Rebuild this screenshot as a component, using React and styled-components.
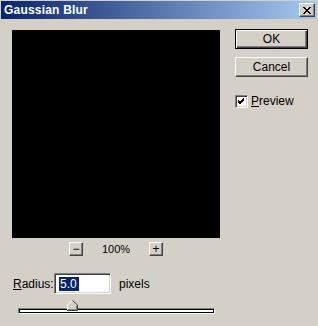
import React from 'react';
import styled, { createGlobalStyle } from 'styled-components';

const GlobalStyle = createGlobalStyle`
  html, body {
    margin: 0;
    padding: 0;
    background: #d4d0c8;
  }
  body {
    font-family: "Liberation Sans", Arial, sans-serif;
    font-size: 12px;
    color: #000;
  }
`;

const Window = styled.div`
  width: 318px;
  height: 326px;
  background: #d4d0c8;
  display: flex;
  flex-direction: column;
  box-sizing: border-box;
  padding: 1px 1px 0;
`;

const TitleBar = styled.div`
  height: 18px;
  display: flex;
  align-items: center;
  justify-content: space-between;
  padding: 0 2px 0 3px;
  background: linear-gradient(to right, #0a246a, #a6caf0);
`;

const Title = styled.span`
  color: #fff;
  font-weight: bold;
  font-size: 12px;
  letter-spacing: 0.2px;
`;

const CloseButton = styled.div`
  width: 16px;
  height: 14px;
  box-sizing: border-box;
  background: #d4d0c8;
  border: 1px solid;
  border-color: #fff #404040 #404040 #fff;
  box-shadow: inset -1px -1px 0 #808080;
  display: flex;
  align-items: center;
  justify-content: center;
`;

const Body = styled.div`
  display: flex;
  flex-direction: column;
  padding: 11px 0 0 11px;
`;

const TopRow = styled.div`
  display: flex;
  align-items: flex-start;
`;

const PreviewColumn = styled.div`
  width: 208px;
  display: flex;
  flex-direction: column;
`;

const Preview = styled.div`
  width: 208px;
  height: 208px;
  background: #000;
`;

const ZoomRow = styled.div`
  display: flex;
  align-items: center;
  margin-top: 4px;
  padding-left: 57px;
  height: 14px;
`;

const ZoomLabel = styled.span`
  width: 66px;
  text-align: center;
  font-size: 11px;
`;

const SmallButton = styled.div`
  width: 14px;
  height: 14px;
  box-sizing: border-box;
  border: 1px solid;
  border-color: #fff #404040 #404040 #fff;
  box-shadow: inset -1px -1px 0 #808080;
  display: flex;
  align-items: center;
  justify-content: center;
  font-size: 12px;
  line-height: 1;
`;

const ButtonColumn = styled.div`
  display: flex;
  flex-direction: column;
  margin-left: 15px;
  margin-top: -1px;
`;

const Button = styled.div`
  width: 73px;
  height: 20px;
  box-sizing: border-box;
  display: flex;
  align-items: center;
  justify-content: center;
  border: 1px solid;
  border-color: ${p => (p.$default ? '#000' : '#fff #404040 #404040 #fff')};
  box-shadow: ${p =>
    p.$default
      ? 'inset 1px 1px 0 #fff, inset -1px -1px 0 #404040, inset -2px -2px 0 #808080'
      : 'inset -1px -1px 0 #808080'};
  margin-bottom: 8px;
  font-size: 12px;
`;

const CheckRow = styled.label`
  display: flex;
  align-items: center;
  margin-top: 9px;
  gap: 3px;
`;

const CheckBox = styled.div`
  width: 13px;
  height: 13px;
  box-sizing: border-box;
  background: #fff;
  border: 1px solid;
  border-color: #808080 #fff #fff #808080;
  box-shadow: inset 1px 1px 0 #404040, inset -1px -1px 0 #d4d0c8;
  display: flex;
  align-items: center;
  justify-content: center;
`;

const Key = styled.span`
  text-decoration: underline;
`;

const RadiusRow = styled.div`
  display: flex;
  align-items: center;
  margin-top: 17px;
  padding-left: 1px;
`;

const Label = styled.span`
  width: 41px;
`;

const TextField = styled.div`
  width: 57px;
  height: 21px;
  box-sizing: border-box;
  background: #fff;
  border: 1px solid;
  border-color: #808080 #fff #fff #808080;
  box-shadow: inset 1px 1px 0 #404040, inset -1px -1px 0 #d4d0c8;
  display: flex;
  align-items: center;
  padding-left: 4px;
`;

const Selected = styled.span`
  background: #0a246a;
  color: #fff;
  padding: 1px 2px 1px 1px;
  line-height: 12px;
`;

const Unit = styled.span`
  margin-left: 8px;
`;

const SliderRow = styled.div`
  position: relative;
  margin-top: 6px;
  margin-left: 6px;
  width: 197px;
  height: 14px;
`;

const Track = styled.div`
  position: absolute;
  left: 0;
  right: 0;
  top: 8px;
  height: 6px;
  box-sizing: border-box;
  background: #fff;
  border: 1px solid;
  border-color: #808080 #fff #fff #808080;
  box-shadow: inset 1px 1px 0 #000, inset -1px -1px 0 #000;
`;

const Thumb = styled.svg`
  position: absolute;
  top: 0;
  left: 49px;
`;

export default function App() {
  return (
    <Window>
      <GlobalStyle />
      <TitleBar>
        <Title>Gaussian Blur</Title>
        <CloseButton>
          <svg width="8" height="7" viewBox="0 0 8 7">
            <path d="M0 0 L7 7 M1 0 L8 7 M7 0 L0 7 M8 0 L1 7" stroke="#000" strokeWidth="1" />
          </svg>
        </CloseButton>
      </TitleBar>
      <Body>
        <TopRow>
          <PreviewColumn>
            <Preview />
            <ZoomRow>
              <SmallButton>−</SmallButton>
              <ZoomLabel>100%</ZoomLabel>
              <SmallButton>+</SmallButton>
            </ZoomRow>
          </PreviewColumn>
          <ButtonColumn>
            <Button $default>OK</Button>
            <Button>Cancel</Button>
            <CheckRow>
              <CheckBox>
                <svg width="7" height="7" viewBox="0 0 7 7">
                  <path d="M0 2 L2 4 L6 0 M0 3 L2 5 L6 1 M0 4 L2 6 L6 2" stroke="#000" strokeWidth="1" fill="none" />
                </svg>
              </CheckBox>
              <span>
                <Key>P</Key>review
              </span>
            </CheckRow>
          </ButtonColumn>
        </TopRow>
        <RadiusRow>
          <Label>
            <Key>R</Key>adius:
          </Label>
          <TextField>
            <Selected>5.0</Selected>
          </TextField>
          <Unit>pixels</Unit>
        </RadiusRow>
        <SliderRow>
          <Track />
          <Thumb width="11" height="11" viewBox="0 0 11 11">
            <path d="M5 0 L10 5 L10 10 L0 10 L0 5 Z" fill="#d4d0c8" />
            <path d="M0.5 10 L0.5 5 L5 0.5" stroke="#fff" fill="none" />
            <path d="M5.5 0.5 L10.5 5 L10.5 10.5 L0 10.5" stroke="#404040" fill="none" />
            <path d="M9.5 5.5 L9.5 9.5 L1 9.5" stroke="#808080" fill="none" />
          </Thumb>
        </SliderRow>
      </Body>
    </Window>
  );
}
